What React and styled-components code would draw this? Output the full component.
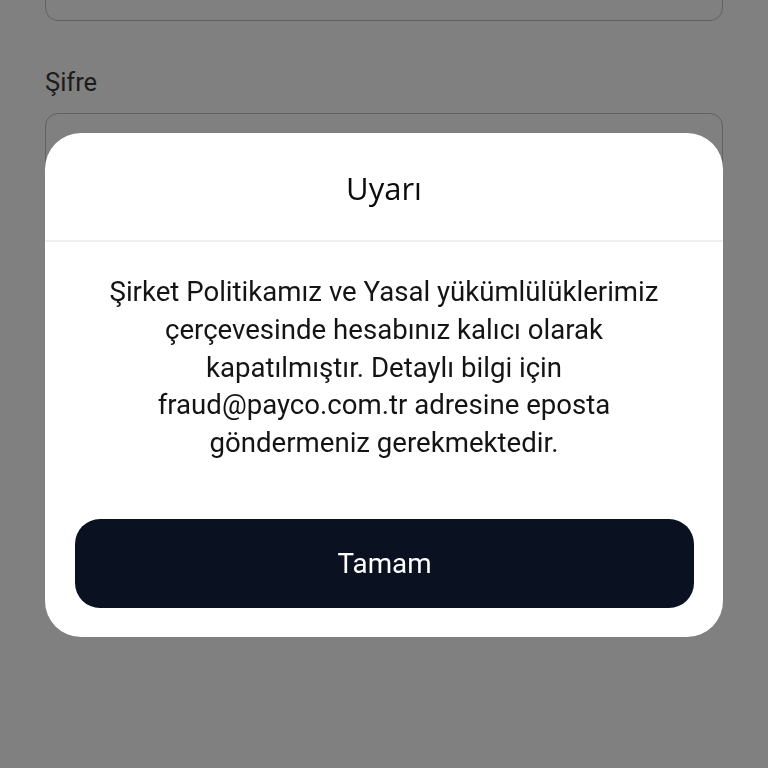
import styled, { createGlobalStyle } from 'styled-components';

const GlobalStyle = createGlobalStyle`
    html, body {
        margin: 0;
        padding: 0;
        height: 100%;
        background: #808080;
        font-family: Roboto, "Liberation Sans", sans-serif;
    }
    #root {
        height: 100%;
    }
`;

const App = () => {
    return (
        <>
            <GlobalStyle />
            <Page>
                <Field>
                    <Input />
                </Field>
                <Field>
                    <FieldLabel>Şifre</FieldLabel>
                    <Input />
                </Field>
            </Page>

            <Overlay>
                <Dialog role="alertdialog" aria-labelledby="dialog-title">
                    <DialogHeader>
                        <DialogTitle id="dialog-title">Uyarı</DialogTitle>
                    </DialogHeader>

                    <DialogBody>
                        Şirket Politikamız ve Yasal yükümlülüklerimiz çerçevesinde hesabınız kalıcı olarak
                        kapatılmıştır. Detaylı bilgi için fraud@payco.com.tr adresine eposta göndermeniz
                        gerekmektedir.
                    </DialogBody>

                    <DialogFooter>
                        <DialogButton type="button">Tamam</DialogButton>
                    </DialogFooter>
                </Dialog>
            </Overlay>
        </>
    );
}

const Page = styled.div`
    display: flex;
    flex-direction: column;
    gap: 46px;
    padding: 0 45px;
    margin-top: -67px;
`;

const Field = styled.div`
    display: flex;
    flex-direction: column;
    gap: 16px;
`;

const FieldLabel = styled.label`
    font-size: 25.5px;
    line-height: 30px;
    color: #1c1c1c;
`;

const Input = styled.div`
    height: 86px;
    border: 1.5px solid #626262;
    border-radius: 13px;
`;

const Overlay = styled.div`
    position: fixed;
    inset: 0;
    display: flex;
    align-items: center;
    justify-content: center;
    padding: 2px 45px 0 45px;
`;

const Dialog = styled.div`
    flex: 1;
    max-width: 678px;
    background: #ffffff;
    border-radius: 36px;
    overflow: hidden;
    display: flex;
    flex-direction: column;
`;

const DialogHeader = styled.div`
    height: 109px;
    display: flex;
    align-items: center;
    justify-content: center;
    border-bottom: 2px solid #efefef;
    box-sizing: border-box;
    padding-top: 4px;
`;

const DialogTitle = styled.h2`
    margin: 0;
    font-family: "Open Sans", "Noto Sans", sans-serif;
    font-weight: 500;
    font-size: 31px;
    color: #0b0b0b;
`;

const DialogBody = styled.p`
    margin: 0;
    padding: 31px 60px 0;
    text-align: center;
    font-size: 27.6px;
    line-height: 37.9px;
    color: #141414;
`;

const DialogFooter = styled.div`
    padding: 57px 29px 29px 30px;
`;

const DialogButton = styled.button`
    width: 100%;
    height: 89px;
    border: none;
    border-radius: 25px;
    background: #0a1120;
    color: #ffffff;
    font-family: Roboto, "Liberation Sans", sans-serif;
    font-size: 27.8px;
    cursor: pointer;
`;

export default App;
